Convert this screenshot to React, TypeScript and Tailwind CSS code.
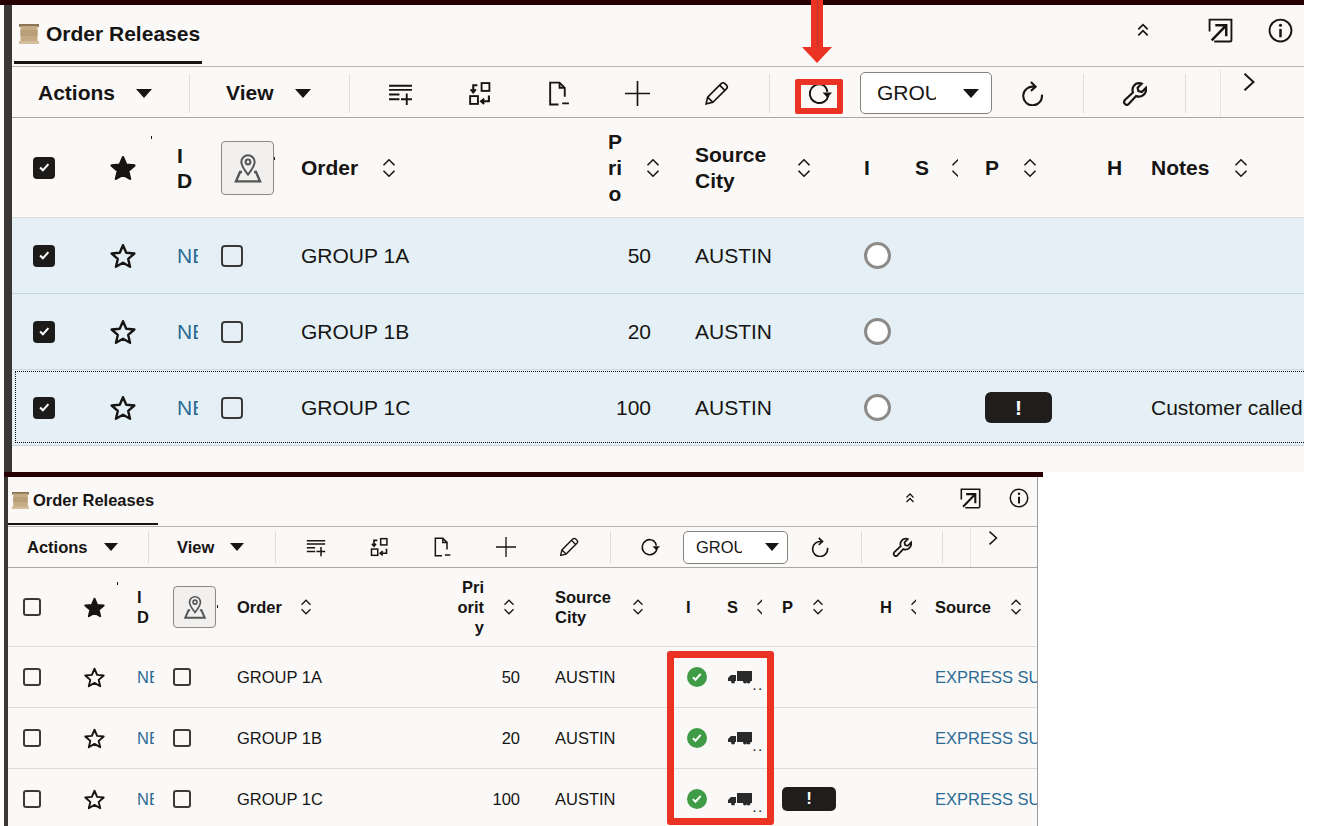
import React from "react";

type P = { c?: string };
const S = ({ c, children, w = 1.6 }: P & { children: React.ReactNode; w?: number }) => (
  <svg viewBox="0 0 24 24" fill="none" stroke="currentColor" strokeWidth={w} className={"block shrink-0 " + (c ?? "")}>{children}</svg>
);
const AddRow = ({ c }: P) => <S c={c} w={1.8}><path d="M1 4.500h22M1 8.500h22M1 13h10M1 17.500h10M18 12v11M12.500 17.500h10.500" /></S>;
const Swap = ({ c }: P) => <S c={c} w={1.8}><rect x="14" y="2" width="7.500" height="7.500" /><rect x="3" y="14.500" width="7.500" height="7.500" /><path d="M10 4H6v6.500M3.500 8l2.500 3 2.500-3M21 14v5.500h-7M16.500 17l-3 2.500 3 2.500" strokeWidth="2" /></S>;
const DocMinus = ({ c }: P) => <S c={c} w={1.8}><path d="M12 22.500H4V1.500h9l5 5v8.500M13 1.500v5h5M15.500 21.500H22" /></S>;
const PlusI = ({ c }: P) => <S c={c}><path d="M12 0v24M0 12h24" /></S>;
const Pencil = ({ c }: P) => <S c={c}><path d="M2 22l1.500-6.500L16.500 2.500c1-1 2.500-1 3.500 0l1.500 1.500c1 1 1 2.500 0 3.500L8.500 20.500zM3.500 15.500l5 5M15 4l5 5" /></S>;
const Refresh = ({ c }: P) => <S c={c} w={1.9}><path d="M14 3.500A9 9 0 1 0 20.500 14" /><path d="M15 11h9l-4.500 5z" fill="currentColor" stroke="none" /><path d="M14 3.500c3 .8 5 3 5.500 7" /></S>;
const Redo = ({ c }: P) => <S c={c} w={2}><path d="M13.500 5.500A9 9 0 1 0 21 13" /><path d="M10.500 1l4.500 4.500-4.500 4" /></S>;
const Wrench = ({ c }: P) => <S c={c} w={2.1}><path d="M2.500 18.500l8-7.500c-1.500-4.500 1.500-9 6-9 1 0 1.700.1 2.500.5l-4 4 .8 3.200 3.200.8 4-4c1 5.500-4 10-9.500 8l-7.500 8c-2.200 1.500-5-1.500-3.500-3.500z" /></S>;
const Chev = ({ c }: P) => <S c={c} w={2.600}><path d="M6 1l12 11L6 23" /></S>;
const DblUp = ({ c }: P) => <S c={c} w={2.600}><path d="M5 11l7-7 7 7M5 20l7-7 7 7" /></S>;
const Open = ({ c }: P) => <S c={c} w={1.800}><path d="M1.500 13V1.500h21v19.500a1.500 1.500 0 0 1-1.500 1.500H6" /><path d="M3.500 21.500L17 7.500M7 7h10.500v10.500" strokeWidth="2.400" /></S>;
const Info = ({ c }: P) => <S c={c} w={1.800}><circle cx="12" cy="12" r="10.500" /><circle cx="12" cy="7" r="1.500" fill="currentColor" stroke="none" /><path d="M12 10.500V18.500" strokeWidth="2.400" /></S>;
const Sort = ({ c }: P) => <S c={c} w={1.700}><path d="M6 9l6-6 6 6M6 15l6 6 6-6" /></S>;
const Star = ({ c, on }: P & { on?: boolean }) => (
  <svg viewBox="0 0 24 24" className={"block shrink-0 " + (c ?? "")} fill={on ? "currentColor" : "none"} stroke="currentColor" strokeWidth="2.200" strokeLinejoin="round">
    <path d="M12 2l3 7 7.500.7-5.700 5 1.700 7.300L12 18.200 5.500 22l1.700-7.300-5.700-5L9 9z" />
  </svg>
);
const Caret = ({ c }: P) => <svg viewBox="0 0 16 9" className={"block shrink-0 " + (c ?? "")} fill="currentColor"><path d="M0 0h16L8 9z" /></svg>;
const Scroll = ({ c }: P) => (
  <svg viewBox="0 0 20 20" className={"block shrink-0 " + (c ?? "")}>
    <rect x="0" y="0" width="20" height="3" fill="#8a7454" />
    <rect x="1.500" y="2" width="17" height="16" fill="#c4ab85" />
    <rect x="1.500" y="6" width="17" height="6" fill="#b99f78" />
    <rect x="0" y="17" width="20" height="3" fill="#d3bd9b" />
  </svg>
);
const MapI = ({ c }: P) => (
  <svg viewBox="0 0 24 24" fill="none" stroke="#555" strokeWidth="1.500" className={"block shrink-0 " + (c ?? "")}>
    <path d="M12 17c-3-4-5-6.500-5-9.500a5 5 0 0 1 10 0c0 3-2 5.500-5 9.500z" />
    <circle cx="12" cy="7.500" r="1.800" />
    <path d="M7.500 15H6l-3 7h18l-3-7h-1.500" strokeWidth="1.800" />
  </svg>
);
const Check = ({ c }: P) => (
  <svg viewBox="0 0 24 24" className={"block " + (c ?? "")} fill="none" stroke="#fff" strokeWidth="3"><path d="M6 12.500l4 4 8-9" /></svg>
);
const Truck = ({ c }: P) => (
  <svg viewBox="0 0 24 14" className={"block shrink-0 " + (c ?? "")} fill="#2a2a2a">
    <rect x="9" y="1" width="15" height="10" />
    <path d="M0 11V8l3-3h5v6z" />
    <circle cx="5" cy="11.500" r="2" />
    <circle cx="17" cy="11.500" r="2" />
    <circle cx="20.500" cy="11.500" r="2" />
  </svg>
);

const big = {
  root: "w-[1300px] ml-1 h-[472px]",
  topBar: "-ml-1",
  leftBar: "w-2",
  body: "w-[1292px]",
  text: "text-[21px]",
  header: "h-[62px]",
  tab: "w-[188px] ml-[2px] h-[59px] gap-[7px] pl-[5px] pt-[2px] border-b-[3px]",
  scroll: "size-[20px]",
  rightBox: "pb-[11px]",
  rightIcons: ["size-[16px] mr-[57px]", "size-[25px] mr-[35px]", "size-[25px] mr-[11px]"],
  toolbar: "h-[51px] pt-[2px]",
  actions: "w-[177px] pl-[26px]",
  caretA: "w-4 h-[9px] ml-[21px]",
  view: "w-[159px] pl-[36px]",
  caretV: "w-4 h-[9px] ml-[22px]",
  sep: "h-[39px]",
  iconsPad: "pl-[11px]",
  iconBox: "w-[79px]",
  iconSize: "size-[25px]",
  iconsEnd: "ml-[13px]",
  refreshBox: "w-[90px] pl-2",
  select: "w-[132px] h-[42px] pl-[16px]",
  selectText: "w-[59px]",
  caretS: "w-4 h-[9px] ml-[27px]",
  redoBox: "w-[80px]",
  redoEnd: "ml-[11px]",
  wrenchBox: "w-[101px]",
  overflow: "ml-[34px] pl-[19px] pt-[4px] w-[84px]",
  chev: "size-[18px]",
  grid: "grid-cols-[89px_76px_44px_80px_299px_95px_169px_51px_70px_122px_44px_153px]",
  headRow: "h-[100px]",
  row: "h-[76px]",
  boxPad: "pl-[21px]",
  box: "size-[22px] rounded-[4px]",
  star: "size-[26px] ml-[9px]",
  headLh: "leading-[26px]",
  idW: "leading-[25px]",
  mapBtn: "w-[53px] h-[54px] rounded-[4px]",
  mapI: "size-[32px]",
  tick1: "left-[50px] top-[18px]",
  tick2: "left-[53px] top-[39px]",
  sort: "size-[22px]",
  orderGap: "gap-[20px]",
  prioHead: "pr-[31px] gap-[14px]",
  prioText: "text-center w-[26px]",
  prioCell: "pr-[44px]",
  srcGap: "gap-[27px]",
  sPartial: "ml-[18px] w-[11px]",
  pGap: "gap-[20px]",
  hPartial: "hidden",
  lastGap: "gap-[21px]",
  radio: "size-[27px]",
  badge: "w-[67px] h-[31px] rounded-[6px] text-[21px]",
  rowBg: "bg-[#e5f0f6] border-b border-[#c9d6dd]",
  neCell: "mr-[23px]",
  lastLabel: "Notes",
  lastText: "Customer called about delay",
  lastLink: false,
  checked: true,
  hasDots: true,
  closedEnd: "",
};

const small = {
  root: "w-[1039px] ml-1 h-[354px]",
  topBar: "",
  leftBar: "w-1",
  body: "w-[1030px]",
  text: "text-[16.5px]",
  header: "h-[50px]",
  tab: "w-[150px] h-[48px] gap-[4px] pl-[4px] border-b-2",
  scroll: "size-[17px]",
  rightBox: "pb-[7px]",
  rightIcons: ["size-[12px] mr-[44px]", "size-[21px] mr-[28px]", "size-[20px] mr-[8px]"],
  toolbar: "h-[41px]",
  actions: "w-[140px] pl-[19px]",
  caretA: "w-[14px] h-2 ml-[16px]",
  view: "w-[126px] pl-[28px]",
  caretV: "w-[14px] h-2 ml-[16px]",
  sep: "h-[32px]",
  iconsPad: "pl-[8px]",
  iconBox: "w-[63.400px]",
  iconSize: "size-[20px]",
  iconsEnd: "ml-[9px]",
  refreshBox: "w-[72px] pl-[6px]",
  select: "w-[105px] h-[33px] pl-[12px]",
  selectText: "w-[46px]",
  caretS: "w-[14px] h-2 ml-[23px]",
  redoBox: "w-[64px]",
  redoEnd: "ml-[9px]",
  wrenchBox: "w-[80px]",
  overflow: "ml-[27px] pl-[15px] pt-[4px] w-[67px]",
  chev: "size-[14px]",
  grid: "grid-cols-[76px_53px_36px_64px_208px_110px_131px_41px_55px_98px_55px_102px]",
  headRow: "h-[79px]",
  row: "h-[61px]",
  boxPad: "pl-[15px]",
  box: "size-[18px] rounded-[3px]",
  star: "size-[21px] ml-0",
  headLh: "leading-[20px]",
  idW: "leading-[20px]",
  mapBtn: "w-[43px] h-[42px] rounded-[4px]",
  mapI: "size-[26px]",
  tick1: "left-[33px] top-[14px]",
  tick2: "left-[44px] top-[37px]",
  sort: "size-[18px]",
  orderGap: "gap-[15px]",
  prioHead: "pr-[37px] gap-[16px]",
  prioText: "text-right",
  prioCell: "pr-[35px]",
  srcGap: "gap-[18px]",
  sPartial: "ml-[15px] w-[9px]",
  pGap: "gap-[16px]",
  hPartial: "ml-[15px] w-[9px]",
  lastGap: "gap-[16px]",
  radio: "size-[20px]",
  badge: "w-[54px] h-[24px] rounded-[5px] text-[17px]",
  rowBg: "border-b border-[#dedcda]",
  neCell: "mr-[19px]",
  lastLabel: "Source",
  lastText: "EXPRESS SUPPLIER",
  lastLink: true,
  checked: false,
  hasDots: false,
  closedEnd: "border-r border-[#9b9b9b]",
};

type Cfg = typeof big;

const Box = ({ cfg, on }: { cfg: Cfg; on: boolean }) =>
  on ? (
    <div className={"bg-[#1d1b1a] flex items-center justify-center " + cfg.box}><Check c="size-[75%]" /></div>
  ) : (
    <div className={"border-2 border-[#3b3a38] bg-transparent " + cfg.box} />
  );

const Sep = ({ cfg }: { cfg: Cfg }) => <div className={"w-px shrink-0 bg-[#dfdedc] " + cfg.sep} />;

const Cell = ({ children, c = "" }: { children?: React.ReactNode; c?: string }) => (
  <div className={"relative flex h-full min-w-0 items-center overflow-hidden whitespace-nowrap " + c}>{children}</div>
);

const rows = [
  { order: "GROUP 1A", prio: "50", flag: false },
  { order: "GROUP 1B", prio: "20", flag: false },
  { order: "GROUP 1C", prio: "100", flag: true },
];

function Panel({ cfg }: { cfg: Cfg }) {
  const Ic = cfg.iconBox;
  return (
    <div className={"flex flex-col " + cfg.root}>
      <div className={"h-[5px] shrink-0 bg-[#280003] " + cfg.topBar} />
      <div className="flex min-h-0 flex-1">
        <div className={"shrink-0 bg-[#3a3735] " + cfg.leftBar} />
        <div className={"flex flex-col overflow-hidden bg-[#fbf9f8] text-[#161513] " + cfg.body + " " + cfg.text + " " + cfg.closedEnd}>
          <div className={"flex shrink-0 items-start border-b border-[#b8b6b3] " + cfg.header}>
            <div className={"flex items-center border-[#161513] font-bold " + cfg.tab}>
              <Scroll c={cfg.scroll} />
              <span>Order Releases</span>
            </div>
            <div className={"ml-auto flex items-center self-stretch " + cfg.rightBox}>
              <DblUp c={cfg.rightIcons[0]} />
              <Open c={cfg.rightIcons[1]} />
              <Info c={cfg.rightIcons[2]} />
            </div>
          </div>

          <div className={"flex shrink-0 items-center border-b border-[#a9a7a4] font-bold " + cfg.toolbar}>
            <div className={"flex shrink-0 items-center " + cfg.actions}><span>Actions</span><Caret c={cfg.caretA} /></div>
            <Sep cfg={cfg} />
            <div className={"flex shrink-0 items-center " + cfg.view}><span>View</span><Caret c={cfg.caretV} /></div>
            <Sep cfg={cfg} />
            <div className={"flex shrink-0 items-center " + cfg.iconsPad}>
              <div className={"flex justify-center " + Ic}><AddRow c={cfg.iconSize} /></div>
              <div className={"flex justify-center " + Ic}><Swap c={cfg.iconSize} /></div>
              <div className={"flex justify-center " + Ic}><DocMinus c={cfg.iconSize} /></div>
              <div className={"flex justify-center " + Ic}><PlusI c={cfg.iconSize} /></div>
              <div className={"flex justify-center " + Ic}><Pencil c={cfg.iconSize} /></div>
            </div>
            <div className={cfg.iconsEnd}><Sep cfg={cfg} /></div>
            <div className={"flex shrink-0 justify-center " + cfg.refreshBox}><Refresh c={cfg.iconSize} /></div>
            <div className={"flex shrink-0 items-center rounded-[5px] border border-[#85827e] bg-white font-normal " + cfg.select}>
              <span className={"overflow-hidden whitespace-nowrap " + cfg.selectText}>GROUP 1</span>
              <Caret c={cfg.caretS} />
            </div>
            <div className={"flex shrink-0 justify-center " + cfg.redoBox}><Redo c={cfg.iconSize} /></div>
            <div className={cfg.redoEnd}><Sep cfg={cfg} /></div>
            <div className={"flex shrink-0 justify-center " + cfg.wrenchBox}><Wrench c={cfg.iconSize} /></div>
            <Sep cfg={cfg} />
            <div className={"h-full shrink-0 border-l border-[#e6e4e2] " + cfg.overflow}><Chev c={cfg.chev} /></div>
          </div>

          <div className={"grid shrink-0 items-center border-b border-[#dedcda] font-bold " + cfg.grid + " " + cfg.headRow}>
            <Cell c={cfg.boxPad}><Box cfg={cfg} on={cfg.checked} /></Cell>
            <Cell>
              <Star on c={cfg.star} />
              <span className={"absolute h-[3px] w-px bg-[#161513] " + cfg.tick1} />
            </Cell>
            <Cell><div className={cfg.idW}>I<br />D</div></Cell>
            <Cell>
              <div className={"flex items-center justify-center border border-[#8b8985] bg-[#f1f0ee] " + cfg.mapBtn}><MapI c={cfg.mapI} /></div>
              <span className={"absolute h-[3px] w-px bg-[#161513] " + cfg.tick2} />
            </Cell>
            <Cell c={cfg.orderGap}><span>Order</span><Sort c={cfg.sort} /></Cell>
            <Cell c={"justify-end " + cfg.prioHead}>
              {cfg.hasDots ? (
                <div className={cfg.headLh + " " + cfg.prioText}>P<br />ri<br />o</div>
              ) : (
                <div className={cfg.headLh + " " + cfg.prioText}>Pri<br />orit<br />y</div>
              )}
              <Sort c={cfg.sort} />
            </Cell>
            <Cell c={cfg.srcGap}><div className={cfg.headLh}>Source<br />City</div><Sort c={cfg.sort} /></Cell>
            <Cell>I</Cell>
            <Cell>
              <span>S</span>
              <div className={"shrink-0 overflow-hidden " + cfg.sPartial}><Sort c={cfg.sort} /></div>
            </Cell>
            <Cell c={cfg.pGap}><span>P</span><Sort c={cfg.sort} /></Cell>
            <Cell>
              <span>H</span>
              <div className={"shrink-0 overflow-hidden " + cfg.hPartial}><Sort c={cfg.sort} /></div>
            </Cell>
            <Cell c={cfg.lastGap}><span>{cfg.lastLabel}</span><Sort c={cfg.sort} /></Cell>
          </div>

          {rows.map((r) => (
            <div key={r.order} className={"grid shrink-0 items-center " + cfg.grid + " " + cfg.row + " " + cfg.rowBg}>
              <Cell c={cfg.boxPad}><Box cfg={cfg} on={cfg.checked} /></Cell>
              <Cell><Star c={cfg.star} /></Cell>
              <Cell c={"text-[#2c6b94] " + cfg.neCell}><span>NEW</span></Cell>
              <Cell><Box cfg={cfg} on={false} /></Cell>
              <Cell>{r.order}</Cell>
              <Cell c={"justify-end " + cfg.prioCell}>{r.prio}</Cell>
              <Cell>AUSTIN</Cell>
              <Cell>
                {cfg.checked ? (
                  <div className={"rounded-full border-[3px] border-[#8d8b88] bg-white " + cfg.radio} />
                ) : (
                  <div className={"ml-px flex items-center justify-center rounded-full bg-[#3f9b45] " + cfg.radio}><Check c="size-[78%]" /></div>
                )}
              </Cell>
              <Cell>
                {!cfg.checked && (
                  <>
                    <Truck c="ml-px h-[14px] w-[24px]" />
                    <span className="mt-[19px] ml-[1px] text-[10px] leading-none font-bold tracking-[3px]">..</span>
                  </>
                )}
              </Cell>
              <Cell>
                {r.flag && (
                  <div className={"flex items-center justify-center bg-[#201e1d] font-bold text-white " + cfg.badge}>!</div>
                )}
              </Cell>
              <Cell />
              <Cell c={cfg.lastLink ? "text-[#2c6b94]" : ""}>
                {cfg.lastLink ? cfg.lastText : r.flag ? cfg.lastText : ""}
              </Cell>
            </div>
          ))}
        </div>
      </div>
    </div>
  );
}

export default function App() {
  return (
    <div className="relative h-[826px] w-[1320px] overflow-hidden bg-white font-['Liberation_Sans',Arial,sans-serif]">
      <Panel cfg={big} />
      <Panel cfg={small} />
      {/* dotted focus ring on the current row of the upper table */}
      <div className="absolute top-[371px] left-[15px] h-[72px] w-[1289px] border-y border-l border-dotted border-[#111]" />
      {/* red annotations */}
      <div className="absolute top-0 left-[811px] h-[47px] w-3 bg-[#ea3323]" />
      <div className="absolute top-0 left-[817px] h-[54px] w-px bg-[#b53a2e]" />
      <div className="absolute top-[47px] left-[802px] -z-0 h-0 w-0 border-x-[15px] border-t-[16px] border-x-transparent border-t-[#ea3323]" />
      <div className="absolute top-[79px] left-[795px] h-[35px] w-[48px] rounded-[2px] border-[6px] border-[#ea3323]" />
      <div className="absolute top-[651px] left-[667px] h-[174px] w-[107px] rounded-[3px] border-[7px] border-[#ea3323]" />
    </div>
  );
}
